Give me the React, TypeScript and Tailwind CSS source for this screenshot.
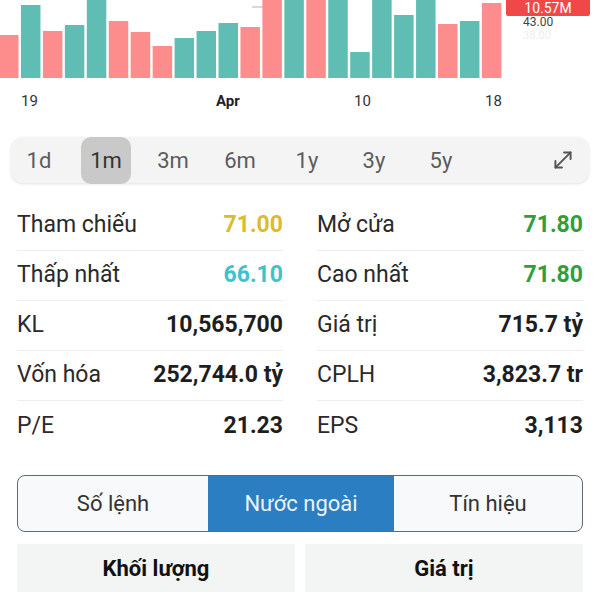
import React from 'react';
import { MoveDiagonal } from 'lucide-react';

type Bar = { top: number; up: boolean };

// volume bars, top y in px of a 78px tall plot, up = teal
const bars: Bar[] = [
  { top: 35, up: false },
  { top: 5, up: true },
  { top: 31, up: false },
  { top: 25, up: true },
  { top: 0, up: true },
  { top: 21, up: false },
  { top: 32, up: false },
  { top: 46, up: false },
  { top: 38, up: true },
  { top: 31, up: true },
  { top: 23, up: true },
  { top: 27, up: false },
  { top: 0, up: false },
  { top: 0, up: true },
  { top: 0, up: false },
  { top: 0, up: true },
  { top: 52, up: true },
  { top: 0, up: true },
  { top: 15, up: true },
  { top: 0, up: true },
  { top: 24, up: false },
  { top: 21, up: true },
  { top: 3, up: false },
];

const ranges = ['1d', '1m', '3m', '6m', '1y', '3y', '5y'];

type Stat = { label: string; value: string; color?: string };

const stats: Stat[][] = [
  [
    { label: 'Tham chiếu', value: '71.00', color: 'text-[#dcbc2c]' },
    { label: 'Mở cửa', value: '71.80', color: 'text-[#2f9e3c]' },
  ],
  [
    { label: 'Thấp nhất', value: '66.10', color: 'text-[#3cc3cc]' },
    { label: 'Cao nhất', value: '71.80', color: 'text-[#2f9e3c]' },
  ],
  [
    { label: 'KL', value: '10,565,700' },
    { label: 'Giá trị', value: '715.7 tỷ' },
  ],
  [
    { label: 'Vốn hóa', value: '252,744.0 tỷ' },
    { label: 'CPLH', value: '3,823.7 tr' },
  ],
  [
    { label: 'P/E', value: '21.23' },
    { label: 'EPS', value: '3,113' },
  ],
];

const Chart: React.FC = () => (
  <div className="relative h-[137px]">
    <svg width="600" height="78" className="block">
      <line x1="252" y1="7" x2="266" y2="7" stroke="#c9cdd2" strokeWidth="1.5" />
      {bars.map((b, i) => (
        <rect
          key={i}
          x={i * 21.95 - 1}
          y={b.top}
          width={19.5}
          height={78 - b.top}
          fill={b.up ? '#5fbdb3' : '#fc8d8c'}
        />
      ))}
    </svg>

    {/* price axis labels under the badge */}
    <span className="absolute left-[523px] top-[16px] text-[12px] leading-none text-[#444]">43.00</span>
    <span className="absolute left-[523px] top-[30px] text-[11px] leading-none text-[#eceef0]">38.00</span>
    <div className="absolute left-[506px] top-0 w-[84px] h-[16px] bg-[#f04848] rounded-b-[2px] flex items-center justify-center">
      <span className="text-[14px] leading-none text-white">10.57M</span>
    </div>

    {/* time axis */}
    <span className="absolute left-[21px] top-[92px] text-[15px] leading-[18px] text-[#333]">19</span>
    <span className="absolute left-[216px] top-[92px] text-[15px] leading-[18px] font-bold text-[#222]">Apr</span>
    <span className="absolute left-[354px] top-[92px] text-[15px] leading-[18px] text-[#333]">10</span>
    <span className="absolute left-[485px] top-[92px] text-[15px] leading-[18px] text-[#333]">18</span>
  </div>
);

const RangeTabs: React.FC = () => (
  <div className="mx-[11px] h-[46px] flex items-center gap-[17px] pl-[3px] pr-[13px] rounded-[12px] bg-[#f4f4f4] shadow-[0_1px_3px_rgba(0,0,0,0.12)]">
    {ranges.map((r) => (
      <div
        key={r}
        className={
          r === '1m'
            ? 'w-[50px] h-[47px] flex items-center justify-center rounded-[10px] bg-[#c9c9c9] text-[22px] text-[#333]'
            : 'w-[50px] h-[47px] flex items-center justify-center text-[22px] text-[#5c5c5c]'
        }
      >
        {r}
      </div>
    ))}
    <MoveDiagonal size={26} strokeWidth={1.8} className="ml-auto text-[#555]" />
  </div>
);

const App: React.FC = () => {
  return (
    <div className="w-[600px] h-[600px] overflow-hidden bg-white font-['Roboto',sans-serif]">
      <Chart />
      <RangeTabs />

      {/* Stats grid */}
      <div className="mt-[18px] px-[17px] grid grid-cols-2 gap-x-[34px]">
        {stats.map((row, ri) =>
          row.map((s, ci) => (
            <div
              key={`${ri}-${ci}`}
              className={
                ri < stats.length - 1
                  ? 'h-[50px] flex items-center justify-between border-b border-[#eeeeee]'
                  : 'h-[50px] flex items-center justify-between'
              }
            >
              <span className="text-[23px] text-[#2a2a2a]">{s.label}</span>
              <span className={`text-[23px] font-bold ${s.color ?? 'text-[#1e1e1e]'}`}>{s.value}</span>
            </div>
          ))
        )}
      </div>

      {/* Segmented control */}
      <div className="mt-[24px] mx-[17px] h-[57px] grid grid-cols-[190px_186px_1fr] rounded-[8px] border-[1.5px] border-[#5e6b77] overflow-hidden bg-[#f8f9fa]">
        <div className="flex items-center justify-center text-[22px] text-[#333]">Số lệnh</div>
        <div className="flex items-center justify-center bg-[#2b7ec1] text-[22px] text-[#eaf5ff]">Nước ngoài</div>
        <div className="flex items-center justify-center text-[22px] text-[#333]">Tín hiệu</div>
      </div>

      {/* Sub tabs */}
      <div className="mt-[12px] mx-[17px] grid grid-cols-2 gap-[10px]">
        <div className="h-[48px] flex items-center justify-center bg-[#f3f4f4] text-[22px] font-bold text-[#111]">Khối lượng</div>
        <div className="h-[48px] flex items-center justify-center bg-[#f3f4f4] text-[22px] font-bold text-[#111]">Giá trị</div>
      </div>
    </div>
  );
};

export default App;
